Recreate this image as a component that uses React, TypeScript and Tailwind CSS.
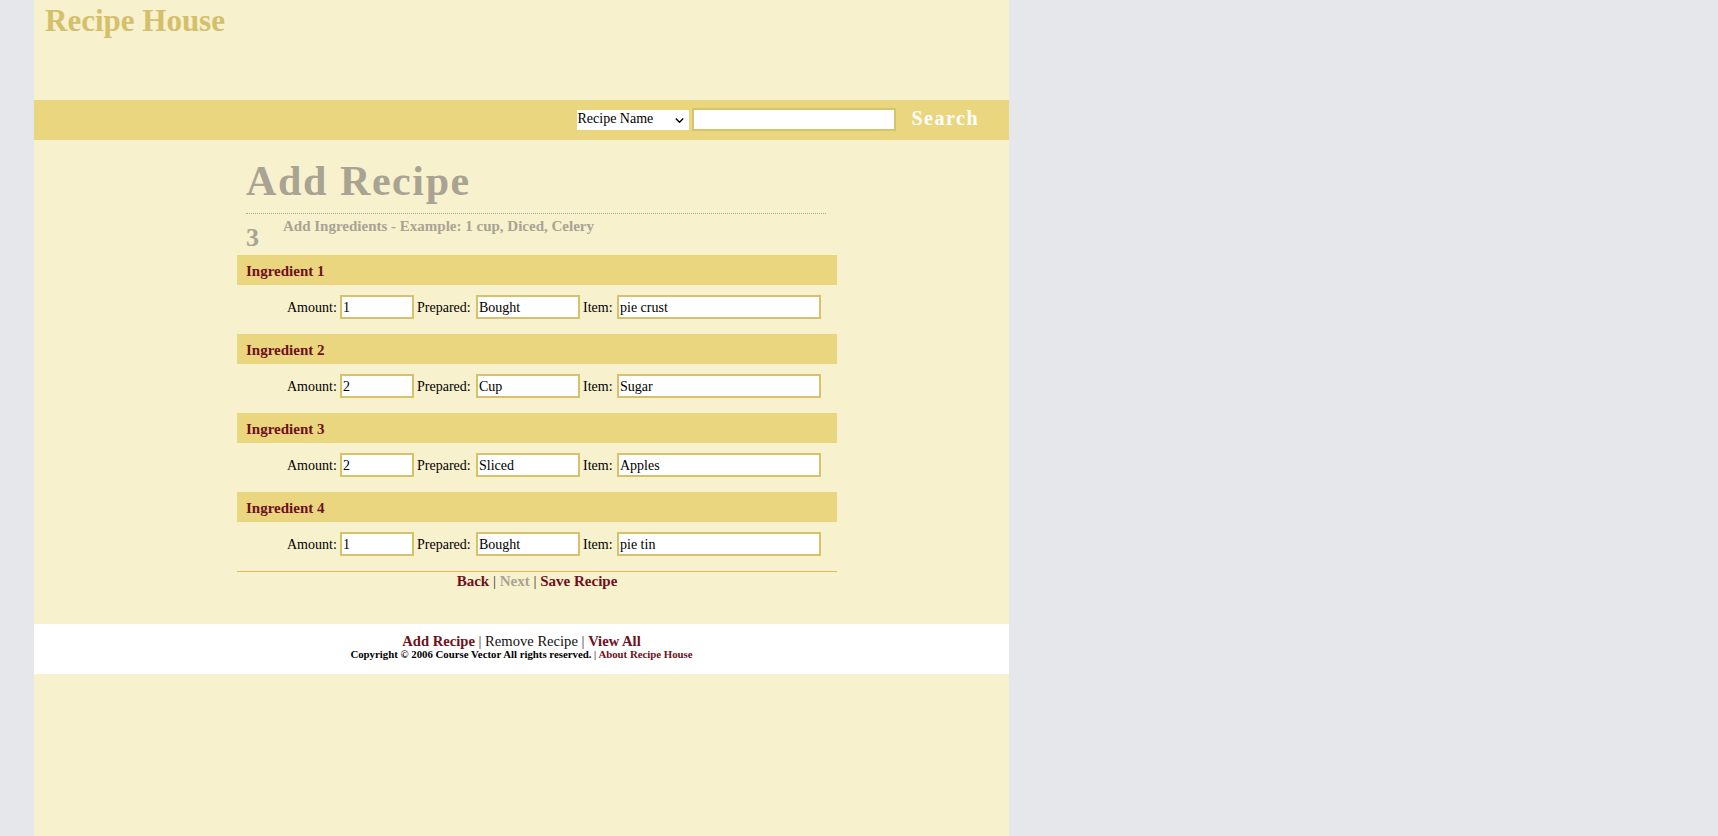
import React from "react";

const ingredients = [
  { n: 1, amount: "1", prepared: "Bought", item: "pie crust" },
  { n: 2, amount: "2", prepared: "Cup", item: "Sugar" },
  { n: 3, amount: "2", prepared: "Sliced", item: "Apples" },
  { n: 4, amount: "1", prepared: "Bought", item: "pie tin" },
];

function IngredientBlock({ n, amount, prepared, item }: { n: number; amount: string; prepared: string; item: string }) {
  return (
    <div>
      <div className="h-[30px] bg-[#ead67f] pl-[9px] pt-[2px] text-[15px] leading-[28px] font-bold text-[#6e1020]">
        Ingredient {n}
      </div>
      <div className="h-[49px] pb-[5px] flex items-center pl-[50px] text-[14px] text-black">
        <span className="w-[53px] shrink-0">Amount:</span>
        <input
          defaultValue={amount}
          className="w-[74px] h-[24px] border-2 border-[#d7c16b] bg-white px-[1px] pt-[1px] text-[14px] text-black outline-none"
        />
        <span className="ml-[3px] w-[59px] shrink-0">Prepared:</span>
        <input
          defaultValue={prepared}
          className="w-[104px] h-[24px] border-2 border-[#d7c16b] bg-white px-[1px] pt-[1px] text-[14px] text-black outline-none"
        />
        <span className="ml-[3px] w-[34px] shrink-0">Item:</span>
        <input
          defaultValue={item}
          className="w-[204px] h-[24px] border-2 border-[#d7c16b] bg-white px-[1px] pt-[1px] text-[14px] text-black outline-none"
        />
      </div>
    </div>
  );
}

export default function App() {
  return (
    <div className="min-h-screen w-full bg-[#e5e7eb] font-['Liberation_Serif','Times_New_Roman',serif]">
      <div className="ml-[34px] w-[975px] min-h-screen bg-[#f8f1cd]">
        <header className="h-[100px] pl-[11px] pt-[3px]">
          <div className="text-[31px] leading-[36px] font-bold text-[#d4c06c]">Recipe House</div>
        </header>

        <div className="h-[40px] bg-[#ead67f] flex items-center justify-end pr-[30px] pb-[1px]">
          <div className="relative w-[112px] h-[20px] bg-white">
            <select className="block appearance-none w-full h-[17px] bg-white text-[14px] leading-[17px] text-black p-0 outline-none border-0">
              <option>Recipe Name</option>
              <option>Ingredient</option>
            </select>
            <svg
              className="absolute right-[5px] top-[8px] pointer-events-none"
              width="9"
              height="5"
              viewBox="0 0 9 5"
              fill="none"
            >
              <path d="M0.8 0.6 L4.5 4.2 L8.2 0.6" stroke="#000" strokeWidth="1.4" />
            </svg>
          </div>
          <input className="ml-[3px] w-[204px] h-[23px] border-2 border-[#d6c36f] bg-white text-[14px] outline-none" />
          <span className="ml-[15px] pb-[4px] text-white font-bold text-[20px] leading-[24px] tracking-[1.5px]">Search</span>
        </div>

        <main className="pl-[203px]">
          <div className="w-[600px]">
            <h1 className="ml-[9px] mr-[11px] mt-[17px] pb-[8px] text-[42px] leading-[48px] font-bold tracking-[1.6px] text-[#a8a393] border-b border-dotted border-[#a8a393]">
              Add Recipe
            </h1>
            <div className="h-[41px] flex items-start pl-[9px] text-[#a8a393] font-bold">
              <span className="w-[37px] mt-[11px] text-[26px] leading-[26px]">3</span>
              <span className="mt-[3px] text-[15px] leading-[18px]">Add Ingredients - Example: 1 cup, Diced, Celery</span>
            </div>

            {ingredients.map((ing) => (
              <IngredientBlock key={ing.n} {...ing} />
            ))}

            <div className="border-t border-[#e4bb4c] text-center text-[15px] leading-[18px] font-bold">
              <span className="text-[#6e1020]">Back</span>
              <span className="font-normal text-[#333]"> | </span>
              <span className="text-[#a8a393]">Next</span>
              <span className="font-normal text-[#333]"> | </span>
              <span className="text-[#6e1020]">Save Recipe</span>
            </div>
          </div>
        </main>

        <footer className="mt-[34px] h-[50px] bg-white pt-[10px] text-center">
          <div className="text-[14.6px] leading-[14px]">
            <span className="font-bold text-[#6e1020]">Add Recipe</span>
            <span className="text-[#333]"> | </span>
            <span className="text-[#111]">Remove Recipe</span>
            <span className="text-[#333]"> | </span>
            <span className="font-bold text-[#6e1020]">View All</span>
          </div>
          <div className="text-[10.8px] leading-[12px] font-bold text-black">
            Copyright © 2006 Course Vector All rights reserved. <span className="font-normal">|</span>{" "}
            <span className="text-[#6e1020]">About Recipe House</span>
          </div>
        </footer>
      </div>
    </div>
  );
}
